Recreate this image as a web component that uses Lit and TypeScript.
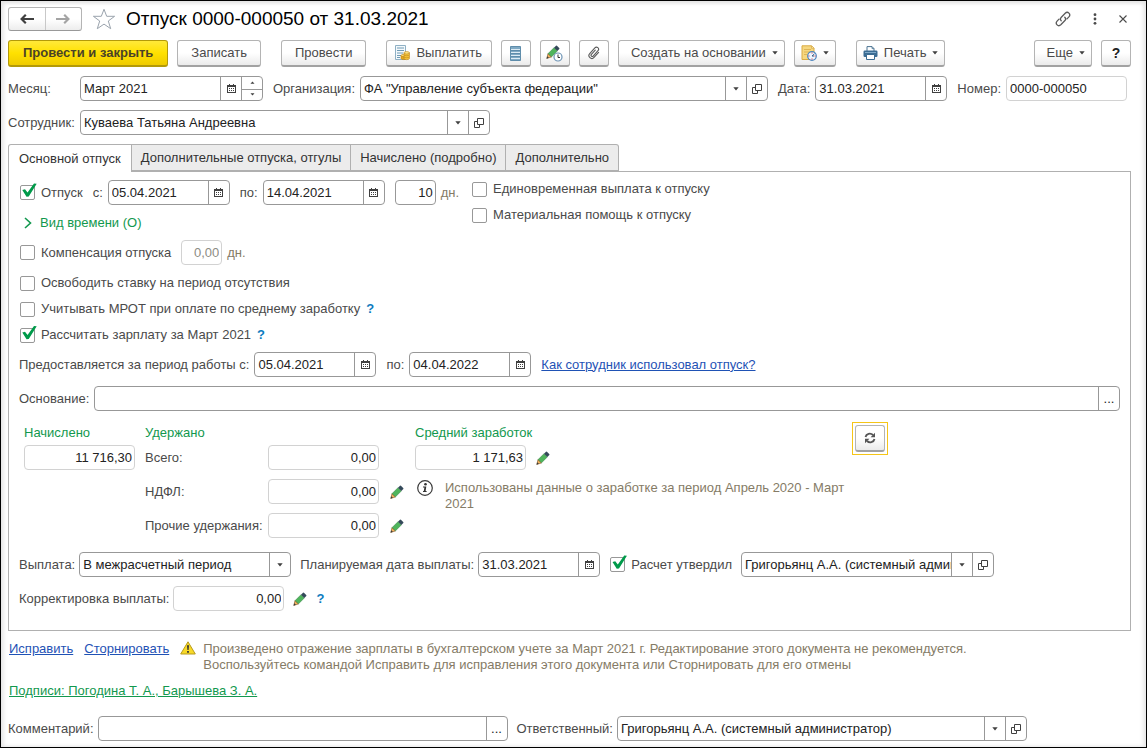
import { LitElement, html, css, svg, nothing, type TemplateResult } from "lit";
import { customElement, state } from "lit/decorators.js";
import { classMap } from "lit/directives/class-map.js";

const calendarIcon = html`<svg width="9" height="9" viewBox="0 0 9 9" shape-rendering="crispEdges" aria-hidden="true">
  <path fill="#404040" d="M2 0h1v1H2zM6 0h1v1H6zM0 1h9v2H0zM0 3h1v6H0zM8 3h1v6H8zM1 8h7v1H1z" />
  <path fill="#404040" d="M2 4h1v1H2zM4 4h1v1H4zM6 4h1v1H6zM2 6h1v1H2zM4 6h1v1H4zM6 6h1v1H6z" />
</svg>`;

const arrowIcon = html`<svg width="6" height="4" viewBox="0 0 6 4" aria-hidden="true">
  <path fill="#404040" d="M.3.3h5.4L3 3.4z" />
</svg>`;

const openIcon = html`<svg width="10" height="10" viewBox="0 0 10 10" fill="none" stroke="#404040" aria-hidden="true">
  <path d="M3.500.5h6v6h-6zM3.500 3.500H.5v6h5V6.500" />
</svg>`;

const pencilShape = svg`
  <path d="M1.900 8.800 5.300 12 11.300 6 8 2.700z" fill="#4fb55c" stroke="#2c7a3c" stroke-width=".5" />
  <path d="M8 2.700 11.300 6 13.300 4Q13.700 3.500 13.200 2.900L11.200.9Q10.600.4 10 .8z" fill="#34495a" />
  <path d="M1.900 8.800 5.300 12 .9 13.400z" fill="#f2b25c" stroke="#7a5628" stroke-width=".6" />
  <path d="M1.300 11.200 2.900 12.700.4 13.700z" fill="#3a3a3a" />`;

const pencilIcon = html`<svg width="14" height="14" viewBox="0 0 14 14" aria-hidden="true">${pencilShape}</svg>`;

const payIcon = html`<svg width="16" height="16" viewBox="0 0 16 16" aria-hidden="true">
  <path d="M1.500.5h10v14h-10z" fill="#f4f9fc" stroke="#8fb0c4" />
  <path d="M3 3h7M3 5.500h7M3 8h6M3 10.500h4M3 12.500h3" stroke="#6f9ab4" />
  <path d="M7 10.500v3c0 1.400 5 1.400 5 0v-3z" fill="#e3a91f" stroke="#b97f12" stroke-width=".6" />
  <ellipse cx="9.500" cy="10.500" rx="2.500" ry="1.100" fill="#ffe07a" stroke="#b97f12" stroke-width=".6" />
  <path d="M10 7.800v5.800c0 1.400 5.400 1.400 5.400 0V7.800z" fill="#f6c63c" stroke="#b97f12" stroke-width=".6" />
  <path d="M10 9.800c0 1.300 5.400 1.300 5.400 0M10 11.800c0 1.300 5.400 1.300 5.400 0" fill="none" stroke="#b97f12" stroke-width=".6" />
  <ellipse cx="12.700" cy="7.800" rx="2.700" ry="1.200" fill="#ffe88a" stroke="#b97f12" stroke-width=".6" />
</svg>`;

const registerIcon = html`<svg width="11" height="15" viewBox="0 0 11 15" aria-hidden="true">
  <path d="M.5.5h10v14H.5z" fill="#7fa9c4" stroke="#5f8dab" />
  <path d="M1 3.500h9M1 6.500h9M1 9.500h9M1 12.500h9" stroke="#dcebf4" />
  <path d="M1 4.500h9M1 7.500h9M1 10.500h9" stroke="#5d8cab" />
</svg>`;

const pencilClockIcon = html`<svg width="17" height="17" viewBox="0 0 17 17" aria-hidden="true">
  ${pencilShape}
  <circle cx="12" cy="12" r="4" fill="#fff" stroke="#6d93b5" stroke-width="1.200" />
  <path d="M12 9.500V12.500h2" fill="none" stroke="#333" />
</svg>`;

const clipIcon = html`<svg width="14" height="14" viewBox="0 0 14 14" fill="none" stroke="#5a5a5a" stroke-width="1.100" stroke-linecap="round" aria-hidden="true">
  <path d="M10 3.500V10.300a2.900 2.900 0 0 1-5.800 0V2.600a2.100 2.100 0 0 1 4.200 0V9.800a1.200 1.200 0 0 1-2.400 0V4" transform="rotate(42 7 7)" />
</svg>`;

const scheduleIcon = html`<svg width="16" height="16" viewBox="0 0 16 16" aria-hidden="true">
  <path d="M1 .8h9.500L13 3.300v11.200H1z" fill="#f6d77f" stroke="#d9ab45" />
  <path d="M3 4.500h7M3 7h6M3 9.500h3" stroke="#dfb555" />
  <path d="M10.500.8v2.500H13z" fill="#fff1c4" stroke="#d09f35" stroke-width=".6" />
  <circle cx="11" cy="11" r="4.300" fill="#eef6ff" stroke="#4d86be" stroke-width="1.200" />
  <path d="M11 11 13.500 8.800M11 11h2" stroke="#3b5f87" fill="none" />
  <path d="M11 7.500v1M11 13.500v1M7.500 11h1M13.500 11h1" stroke="#d33" />
</svg>`;

const printIcon = html`<svg width="15" height="14" viewBox="0 0 15 14" aria-hidden="true">
  <path d="M4 5V.6h5l2 2V5" fill="#fff" stroke="#4a7392" />
  <path d="M9 .6v2h2" fill="none" stroke="#4a7392" stroke-width=".8" />
  <rect x=".5" y="4.500" width="14" height="6.500" rx="1.200" fill="#3b6c93" />
  <path d="M2 6.500h11" stroke="#7fa9c8" />
  <path d="M3.500 8.500h8v5h-8z" fill="#fff" stroke="#3b6c93" />
</svg>`;

const backIcon = html`<svg width="14" height="10" viewBox="0 0 14 10" fill="none" stroke-width="2.200" aria-hidden="true">
  <path d="M14 5H2M5.800.8 1.600 5l4.200 4.200" stroke="currentColor" />
</svg>`;

const forwardIcon = html`<svg width="14" height="10" viewBox="0 0 14 10" fill="none" stroke-width="2.200" aria-hidden="true">
  <path d="M0 5h12M8.200.8l4.200 4.200-4.200 4.200" stroke="currentColor" />
</svg>`;

const starIcon = html`<svg width="24" height="22" viewBox="0 0 24 22" aria-hidden="true">
  <path d="M12 1.300 14.700 8.300H22.600L16.300 13l2.400 7.700L12 16.100 5.300 20.700 7.700 13 1.400 8.300H9.300z" fill="#fff" stroke="#9aa3ad" />
</svg>`;

const linkIcon = html`<svg width="16" height="16" viewBox="0 0 16 16" fill="none" stroke="#5a5a5a" stroke-width="1.300" stroke-linecap="round" aria-hidden="true">
  <path d="M6.200 9.800c-1-1.100-.9-2.600.1-3.600l3.900-4c2.600-2.400 6.100.9 3.700 3.700l-1.900 2M9.800 6.200c1 1.100.9 2.600-.1 3.600l-3.900 4c-2.600 2.400-6.100-.9-3.700-3.700L4 8.100" />
</svg>`;

const dotsIcon = html`<svg width="4" height="12" viewBox="0 0 4 12" fill="#4a4a4a" aria-hidden="true">
  <circle cx="2" cy="1.700" r="1.400" /><circle cx="2" cy="6" r="1.400" /><circle cx="2" cy="10.300" r="1.400" />
</svg>`;

const closeIcon = html`<svg width="8" height="8" viewBox="0 0 8 8" stroke="#4a4a4a" stroke-width="1.100" aria-hidden="true">
  <path d="M.5.5l7 7M7.500.5l-7 7" />
</svg>`;

const refreshIcon = html`<svg width="12" height="12" viewBox="0 0 12 12" aria-hidden="true">
  <path d="M1.500 5C2.200 1.600 6.500.6 9 3M10.500 7C9.800 10.400 5.500 11.400 3 9" fill="none" stroke="#555" stroke-width="1.800" />
  <path d="M11 .8V5.200H6.600zM1 11.200V6.800h4.400z" fill="#555" />
</svg>`;

const infoIcon = html`<svg width="16" height="16" viewBox="0 0 16 16" aria-hidden="true">
  <circle cx="8" cy="8" r="7.300" fill="#fff" stroke="#3a3a3a" stroke-width="1.200" />
  <circle cx="8.500" cy="4.300" r="1.300" fill="#333" />
  <path d="M6 6.600h3.300L8.600 11h1v1H6v-1h.8l.6-3.400H6z" fill="#333" />
</svg>`;

const warningIcon = html`<svg width="16" height="14" viewBox="0 0 16 14" aria-hidden="true">
  <path d="M8 .8 15.300 13H.7z" fill="#f8d927" stroke="#b79a1c" stroke-linejoin="round" />
  <path d="M7 4.300h2L8.600 9H7.400zM7.100 10h1.800v1.700H7.100z" fill="#333" />
</svg>`;

const chevronIcon = html`<svg width="8" height="12" viewBox="0 0 8 12" fill="none" stroke="#12984e" stroke-width="1.600" aria-hidden="true">
  <path d="M1 1l5.500 5L1 11" />
</svg>`;

const TABS = ["Основной отпуск", "Дополнительные отпуска, отгулы", "Начислено (подробно)", "Дополнительно"];

type Addon = "calendar" | "list" | "open" | "more" | "spin";

const ADDONS: Record<Exclude<Addon, "spin">, { title: string; content: TemplateResult | string }> = {
  calendar: { title: "Выбрать дату", content: calendarIcon },
  list: { title: "Выбрать из списка", content: arrowIcon },
  open: { title: "Открыть", content: openIcon },
  more: { title: "Выбрать", content: "..." },
};

@customElement("app-root")
export class AppRoot extends LitElement {
  static styles = css`
    :host {
      display: block;
      font-family: "Liberation Sans", Arial, sans-serif;
      font-size: 13px;
      line-height: 16px;
      color: #4a4a4a;
    }
    * { box-sizing: border-box; }
    button, input, select { font: inherit; color: inherit; margin: 0; }
    button { cursor: pointer; }
    svg { display: block; flex: none; }

    .window {
      min-height: 100vh;
      padding: 6px 15px 5px 7px;
      background: #fff;
      border: 1px solid #000;
      box-shadow: inset 0 2px 4px #e2e2e2, inset -3px 0 4px #ececec, inset 3px 0 4px #ececec;
    }

    .row { display: flex; align-items: center; gap: 10px; min-height: 25px; }
    .pair { display: flex; align-items: center; gap: 5px; flex: none; }
    .row.tight { gap: 9px; }
    .tight .pair { gap: 4px; }
    .grow { flex: 1; min-width: 0; }
    .pair > label { flex: none; white-space: nowrap; }

    .titlebar { display: flex; align-items: center; height: 24px; margin-bottom: 9px; }
    .history {
      display: flex;
      width: 74px;
      height: 24px;
      border: 1px solid #b4b4b4;
      border-bottom-color: #999;
      border-radius: 3px;
      background: linear-gradient(#fff 50%, #ededed);
    }
    .history button {
      flex: 1;
      display: grid;
      place-items: center;
      padding: 0;
      border: 0;
      background: none;
      color: #404040;
    }
    .history button + button { border-left: 1px solid #c8c8c8; color: #a4a4a4; }
    .plain { display: grid; place-items: center; padding: 0; border: 0; background: none; }
    .star { margin: 0 10px; }
    h1 { flex: 1; margin: 0; font-size: 19px; line-height: 24px; font-weight: 400; color: #000; }
    .window-tools { display: flex; align-items: center; gap: 22px; padding-right: 4px; }

    .toolbar { display: flex; gap: 9px; height: 27px; margin-bottom: 9px; }
    .btn {
      display: flex;
      align-items: center;
      justify-content: center;
      gap: 6px;
      height: 27px;
      padding: 0 13px;
      border: 1px solid #b4b4b4;
      border-bottom: 2px solid #a2a2a2;
      border-radius: 3px;
      background: linear-gradient(#fff 50%, #ebebeb);
      white-space: nowrap;
    }
    .btn.primary {
      padding: 0 14px;
      border-color: #b39a08;
      background: linear-gradient(#ffe93a, #ffe100 50%, #efcb00);
      font-weight: 700;
      color: #4a4228;
    }
    .btn.square { width: 30px; padding: 0; }
    .btn.menu { padding: 0 6px 0 12px; }
    .btn.iconic { padding: 0 9px 0 7px; }
    .btn.compact { padding: 0 6px; }
    .btn.help { font-size: 14px; font-weight: 700; color: #222; }
    .section { margin-left: 11px; }
    .end { margin-left: auto; }

    .head-rows { display: grid; gap: 9px; padding-right: 4px; margin-bottom: 9px; }
    .head-label { width: 67px; }

    .field {
      position: relative;
      display: flex;
      flex: none;
      height: 25px;
      border: 1px solid #989898;
      border-radius: 4px;
      background: #fff;
      color: #222;
      overflow: hidden;
    }
    .field.soft { border-color: #d2d2d2; }
    .field.long { width: 410px; }
    .field.date { width: 122px; }
    .field.month { width: 183px; }
    .field.stamp { width: 132px; }
    .field.number { width: 121px; }
    .field.days { width: 41px; }
    .field.sum { width: 111px; }
    .field.payout { width: 212px; }
    .field.approver { width: 253px; }
    .field.fill { flex: 1; width: auto; min-width: 0; }
    .field input, .field select {
      flex: 1;
      min-width: 0;
      width: 0;
      padding: 0 0 0 3px;
      border: 0;
      outline: 0;
      background: none;
      appearance: none;
    }
    .field.right input { padding: 0 2px 0 0; text-align: right; }
    .field.muted { color: #8c8c84; }
    .field button, .field .arrow {
      display: grid;
      place-items: center;
      width: 21px;
      padding: 0;
      border: 0;
      border-left: 1px solid #989898;
      background: none;
    }
    .field .arrow { position: absolute; inset: 0 0 0 auto; pointer-events: none; }
    .field .spin { display: grid; grid-template-rows: 1fr 1fr; width: 21px; border-left: 1px solid #989898; }
    .field .spin button { width: auto; border-left: 0; }
    .field .spin button + button { border-top: 1px solid #989898; }
    .field .spin svg { width: 5px; height: 3px; }
    .flip { transform: scaleY(-1); }

    .tabs { display: flex; height: 28px; }
    .tab {
      height: 27px;
      padding: 0 9px;
      border: 1px solid #b0b0b0;
      border-left-width: 0;
      background: #ececec;
      color: #333;
      white-space: nowrap;
    }
    .tab:first-child { padding: 0 10px; border-left-width: 1px; border-top-left-radius: 3px; }
    .tab:last-child { border-top-right-radius: 3px; }
    .tab.active { height: 28px; border-bottom: 0; background: #fff; position: relative; }

    .panel {
      margin-top: -1px;
      padding: 8px 10px 19px;
      border: 1px solid #b0b0b0;
      background: #fff;
    }

    .check { display: flex; align-items: center; gap: 6px; white-space: nowrap; }
    .check input {
      position: relative;
      flex: none;
      width: 15px;
      height: 15px;
      margin-left: 1px;
      border: 1px solid #989898;
      border-radius: 2px;
      background: #fff;
      appearance: none;
    }
    .check input:checked::after {
      content: "";
      position: absolute;
      left: 1px;
      top: -3px;
      width: 15px;
      height: 14px;
      background: #009a4a;
      clip-path: polygon(2% 50%, 20% 44%, 37% 68%, 80% 4%, 98% 6%, 45% 96%, 30% 98%);
    }

    .vacation { display: flex; gap: 12px; }
    .options { display: grid; align-content: start; gap: 10px; padding-top: 1px; }
    .stack { display: grid; gap: 5px; }
    .disclosure {
      display: flex;
      align-items: center;
      gap: 8px;
      height: 25px;
      padding: 0 0 0 5px;
      border: 0;
      background: none;
      color: #12984e;
    }
    .unit { color: #857b66; }
    .inline { display: flex; align-items: center; gap: 6px; height: 16px; }
    .flags { display: grid; gap: 10px; margin: 10px 0 9px; }
    .help-mark { padding: 0; border: 0; background: none; color: #0d7cc0; font-weight: 700; }
    a { color: #1f52b5; }
    a.signatures { color: #12984e; }
    .lines { display: grid; gap: 9px; }

    .totals {
      display: grid;
      grid-template-columns: 111px 260px 427px auto;
      justify-content: start;
      column-gap: 10px;
      margin: 14px 0 14px 5px;
    }
    .totals h2 { margin: 0; font-size: 13px; line-height: 16px; font-weight: 400; color: #12984e; }
    .group { display: grid; align-content: start; gap: 4px; }
    .deductions { display: grid; grid-template-columns: 118px 111px 20px; gap: 9px 5px; align-items: center; }
    .deductions > .plain, .average .plain { margin-left: 5px; }
    .average .note { display: grid; grid-template-columns: 16px 400px; gap: 12px; margin: 6px 0 0 2px; }
    .note { color: #857b66; }
    .refresh-box { margin-top: -3px; padding: 2px; border: 1px solid #f5c518; }

    .notice { display: flex; gap: 11px; margin-top: 10px; padding-left: 1px; }
    .notice p { margin: 0; }
    .notice .warn { display: flex; gap: 7px; }
    .signature-line { margin: 10px 0 17px; padding-left: 1px; }
  `;

  @state() private tab = 0;

  private field(
    id: string,
    value: string,
    kind: string,
    opts: { addons?: Addon[]; label?: string; readonly?: boolean } = {},
  ) {
    const { addons = [], label, readonly = false } = opts;
    return html`<div class="field ${kind}">
      <input id=${id} type="text" .value=${value} ?readonly=${readonly} aria-label=${label ?? nothing} />
      ${addons.map((addon) =>
        addon === "spin"
          ? html`<div class="spin">
              <button type="button" aria-label="Следующий месяц"><span class="flip">${arrowIcon}</span></button>
              <button type="button" aria-label="Предыдущий месяц">${arrowIcon}</button>
            </div>`
          : html`<button type="button" aria-label=${ADDONS[addon].title}>${ADDONS[addon].content}</button>`,
      )}
    </div>`;
  }

  private check(id: string, text: string, checked = false) {
    return html`<label class="check" for=${id}><input id=${id} type="checkbox" .checked=${checked} />${text}</label>`;
  }

  private edit(label: string) {
    return html`<button type="button" class="plain" aria-label=${label}>${pencilIcon}</button>`;
  }

  private help() {
    return html`<button type="button" class="help-mark">?</button>`;
  }

  private renderTitle() {
    return html`<header class="titlebar">
      <div class="history">
        <button type="button" aria-label="Назад">${backIcon}</button>
        <button type="button" aria-label="Вперед">${forwardIcon}</button>
      </div>
      <button type="button" class="plain star" aria-label="В избранное">${starIcon}</button>
      <h1>Отпуск 0000-000050 от 31.03.2021</h1>
      <div class="window-tools">
        <button type="button" class="plain" aria-label="Ссылка">${linkIcon}</button>
        <button type="button" class="plain" aria-label="Меню">${dotsIcon}</button>
        <button type="button" class="plain" aria-label="Закрыть">${closeIcon}</button>
      </div>
    </header>`;
  }

  private renderToolbar() {
    return html`<div class="toolbar" role="toolbar">
      <button type="button" class="btn primary">Провести и закрыть</button>
      <button type="button" class="btn">Записать</button>
      <button type="button" class="btn section">Провести</button>
      <button type="button" class="btn iconic section">${payIcon}Выплатить</button>
      <button type="button" class="btn square" aria-label="Движения документа">${registerIcon}</button>
      <button type="button" class="btn square" aria-label="Исправления">${pencilClockIcon}</button>
      <button type="button" class="btn square" aria-label="Файлы">${clipIcon}</button>
      <button type="button" class="btn menu">Создать на основании${arrowIcon}</button>
      <button type="button" class="btn compact" aria-label="Сроки">${scheduleIcon}${arrowIcon}</button>
      <button type="button" class="btn compact section">${printIcon}Печать${arrowIcon}</button>
      <button type="button" class="btn menu end">Еще${arrowIcon}</button>
      <button type="button" class="btn square help">?</button>
    </div>`;
  }

  private renderMain() {
    return html`
      <div class="vacation">
        <div class="stack">
          <div class="row">
            ${this.check("vacation", "Отпуск", true)}
            <div class="pair"><label for="from">с:</label>${this.field("from", "05.04.2021", "date", { addons: ["calendar"] })}</div>
            <div class="pair"><label for="to">по:</label>${this.field("to", "14.04.2021", "date", { addons: ["calendar"] })}</div>
            <div class="pair">${this.field("days", "10", "days right", { label: "Дней отпуска" })}<span class="unit">дн.</span></div>
          </div>
          <button type="button" class="disclosure">${chevronIcon}Вид времени (О)</button>
          <div class="row">
            ${this.check("compensation", "Компенсация отпуска")}
            <div class="pair">
              ${this.field("compensation-days", "0,00", "days right soft muted", { label: "Дней компенсации", readonly: true })}
              <span class="unit">дн.</span>
            </div>
          </div>
        </div>
        <div class="options">
          ${this.check("bonus", "Единовременная выплата к отпуску")}
          ${this.check("aid", "Материальная помощь к отпуску")}
        </div>
      </div>

      <div class="flags">
        <div class="inline">${this.check("release", "Освободить ставку на период отсутствия")}</div>
        <div class="inline">${this.check("mrot", "Учитывать МРОТ при оплате по среднему заработку")}${this.help()}</div>
        <div class="inline">${this.check("salary", "Рассчитать зарплату за Март 2021", true)}${this.help()}</div>
      </div>

      <div class="lines">
        <div class="row">
          <div class="pair"><label for="work-from">Предоставляется за период работы с:</label>${this.field("work-from", "05.04.2021", "date", { addons: ["calendar"] })}</div>
          <div class="pair"><label for="work-to">по:</label>${this.field("work-to", "04.04.2022", "date", { addons: ["calendar"] })}</div>
          <a href="#usage">Как сотрудник использовал отпуск?</a>
        </div>
        <div class="pair"><label for="basis">Основание:</label>${this.field("basis", "", "fill", { addons: ["more"] })}</div>
      </div>

      <div class="totals">
        <div class="group">
          <h2>Начислено</h2>
          ${this.field("accrued", "11 716,30", "sum right soft", { label: "Начислено", readonly: true })}
        </div>
        <div class="group">
          <h2>Удержано</h2>
          <div class="deductions">
            <label for="total">Всего:</label>${this.field("total", "0,00", "sum right soft", { readonly: true })}<span></span>
            <label for="ndfl">НДФЛ:</label>${this.field("ndfl", "0,00", "sum right soft", { readonly: true })}${this.edit("Изменить НДФЛ")}
            <label for="other">Прочие удержания:</label>${this.field("other", "0,00", "sum right soft", { readonly: true })}${this.edit("Изменить удержания")}
          </div>
        </div>
        <div class="group average">
          <h2>Средний заработок</h2>
          <div class="pair">${this.field("average", "1 171,63", "sum right soft", { label: "Средний заработок", readonly: true })}${this.edit("Изменить средний заработок")}</div>
          <div class="note">${infoIcon}<span>Использованы данные о заработке за период Апрель 2020 - Март 2021</span></div>
        </div>
        <div class="refresh">
          <div class="refresh-box"><button type="button" class="btn square" aria-label="Пересчитать">${refreshIcon}</button></div>
        </div>
      </div>

      <div class="lines">
        <div class="row tight">
          <div class="pair">
            <label for="payout">Выплата:</label>
            <div class="field payout">
              <select id="payout"><option>В межрасчетный период</option><option>С зарплатой</option><option>С авансом</option></select>
              <span class="arrow">${arrowIcon}</span>
            </div>
          </div>
          <div class="pair"><label for="pay-date">Планируемая дата выплаты:</label>${this.field("pay-date", "31.03.2021", "date", { addons: ["calendar"] })}</div>
          ${this.check("approved", "Расчет утвердил", true)}
          ${this.field("approver", "Григорьянц А.А. (системный администратор)", "approver", { addons: ["list", "open"], label: "Утвердил" })}
        </div>
        <div class="row tight">
          <div class="pair"><label for="correction">Корректировка выплаты:</label>${this.field("correction", "0,00", "sum right soft", { readonly: true })}</div>
          ${this.edit("Изменить корректировку")}${this.help()}
        </div>
      </div>
    `;
  }

  render() {
    return html`<main class="window">
      ${this.renderTitle()} ${this.renderToolbar()}
      <div class="head-rows">
        <div class="row">
          <div class="pair"><label class="head-label" for="month">Месяц:</label>${this.field("month", "Март 2021", "month", { addons: ["calendar", "spin"] })}</div>
          <div class="pair grow"><label for="org">Организация:</label>${this.field("org", 'ФА "Управление субъекта федерации"', "fill", { addons: ["list", "open"] })}</div>
          <div class="pair"><label for="date">Дата:</label>${this.field("date", "31.03.2021", "stamp", { addons: ["calendar"] })}</div>
          <div class="pair"><label for="doc-number">Номер:</label>${this.field("doc-number", "0000-000050", "number soft")}</div>
        </div>
        <div class="pair"><label class="head-label" for="employee">Сотрудник:</label>${this.field("employee", "Куваева Татьяна Андреевна", "long", { addons: ["list", "open"] })}</div>
      </div>

      <div class="tabs" role="tablist">
        ${TABS.map(
          (name, i) => html`<button
            type="button"
            role="tab"
            aria-selected=${i === this.tab ? "true" : "false"}
            class=${classMap({ tab: true, active: i === this.tab })}
            @click=${() => (this.tab = i)}
          >${name}</button>`,
        )}
      </div>
      <section class="panel" role="tabpanel">${this.tab === 0 ? this.renderMain() : nothing}</section>

      <div class="notice">
        <a href="#fix">Исправить</a>
        <a href="#reverse">Сторнировать</a>
        <div class="warn">
          ${warningIcon}
          <p class="note">
            Произведено отражение зарплаты в бухгалтерском учете за Март 2021 г. Редактирование этого документа не рекомендуется.<br />
            Воспользуйтесь командой Исправить для исправления этого документа или Сторнировать для его отмены
          </p>
        </div>
      </div>
      <div class="signature-line"><a class="signatures" href="#signatures">Подписи: Погодина Т. А., Барышева З. А.</a></div>
      <div class="row tight">
        <div class="pair"><label for="comment">Комментарий:</label>${this.field("comment", "", "long", { addons: ["more"] })}</div>
        <div class="pair"><label for="owner">Ответственный:</label>${this.field("owner", "Григорьянц А.А. (системный администратор)", "long", { addons: ["list", "open"] })}</div>
      </div>
    </main>`;
  }
}
